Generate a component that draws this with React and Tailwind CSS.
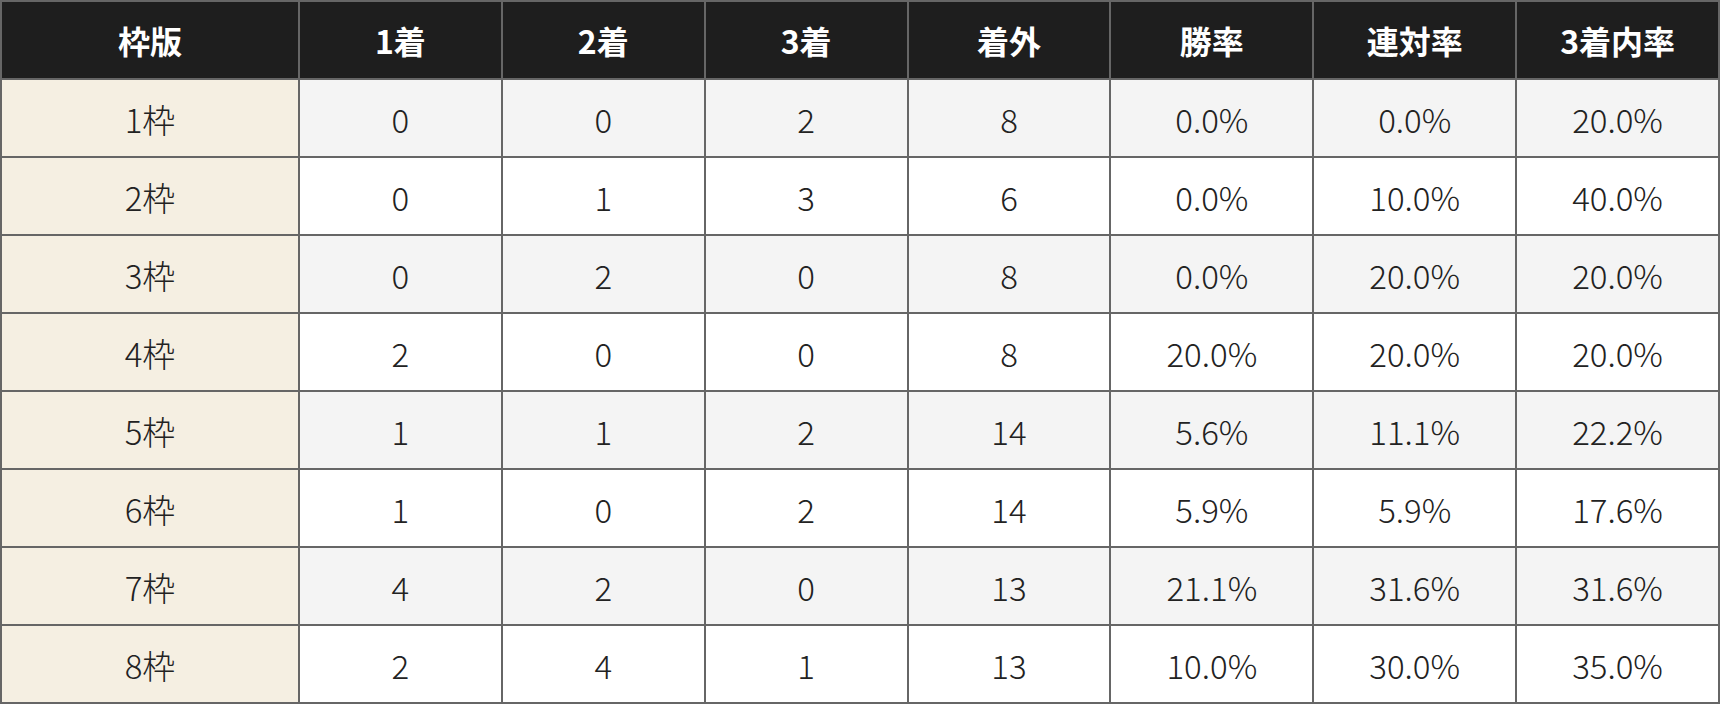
import React from 'react'

const headers = ["枠版", "1着", "2着", "3着", "着外", "勝率", "連対率", "3着内率"]

const rows = [
    ["1枠", "0", "0", "2", "8", "0.0%", "0.0%", "20.0%"],
    ["2枠", "0", "1", "3", "6", "0.0%", "10.0%", "40.0%"],
    ["3枠", "0", "2", "0", "8", "0.0%", "20.0%", "20.0%"],
    ["4枠", "2", "0", "0", "8", "20.0%", "20.0%", "20.0%"],
    ["5枠", "1", "1", "2", "14", "5.6%", "11.1%", "22.2%"],
    ["6枠", "1", "0", "2", "14", "5.9%", "5.9%", "17.6%"],
    ["7枠", "4", "2", "0", "13", "21.1%", "31.6%", "31.6%"],
    ["8枠", "2", "4", "1", "13", "10.0%", "30.0%", "35.0%"],
]

export default function App() {
  return (
    <div className="w-[1720px] h-[704px] bg-[#666666] p-[2px] font-['Noto_Sans_CJK_JP','Noto_Sans',sans-serif]">
        <div className="grid grid-cols-[296px_repeat(7,1fr)] grid-rows-[repeat(9,76px)] gap-[2px] h-full">
            {headers.map((h) => (
                <div key={h} className="bg-[#1e1e1e] text-white font-bold text-[32px] flex items-center justify-center">{h}</div>
            ))}
            {rows.map((row, i) => row.map((cell, j) => {
                let bg = i % 2 === 0 ? "bg-[#f4f4f4]" : "bg-white"
                if (j === 0) bg = "bg-[#f5efe2]"
                return (
                    <div key={i + "-" + j} className={`${bg} text-[#222222] font-light text-[33px] flex items-center justify-center pt-[3px]`}>{cell}</div>
                )
            }))}
        </div>
    </div>
  )
}
